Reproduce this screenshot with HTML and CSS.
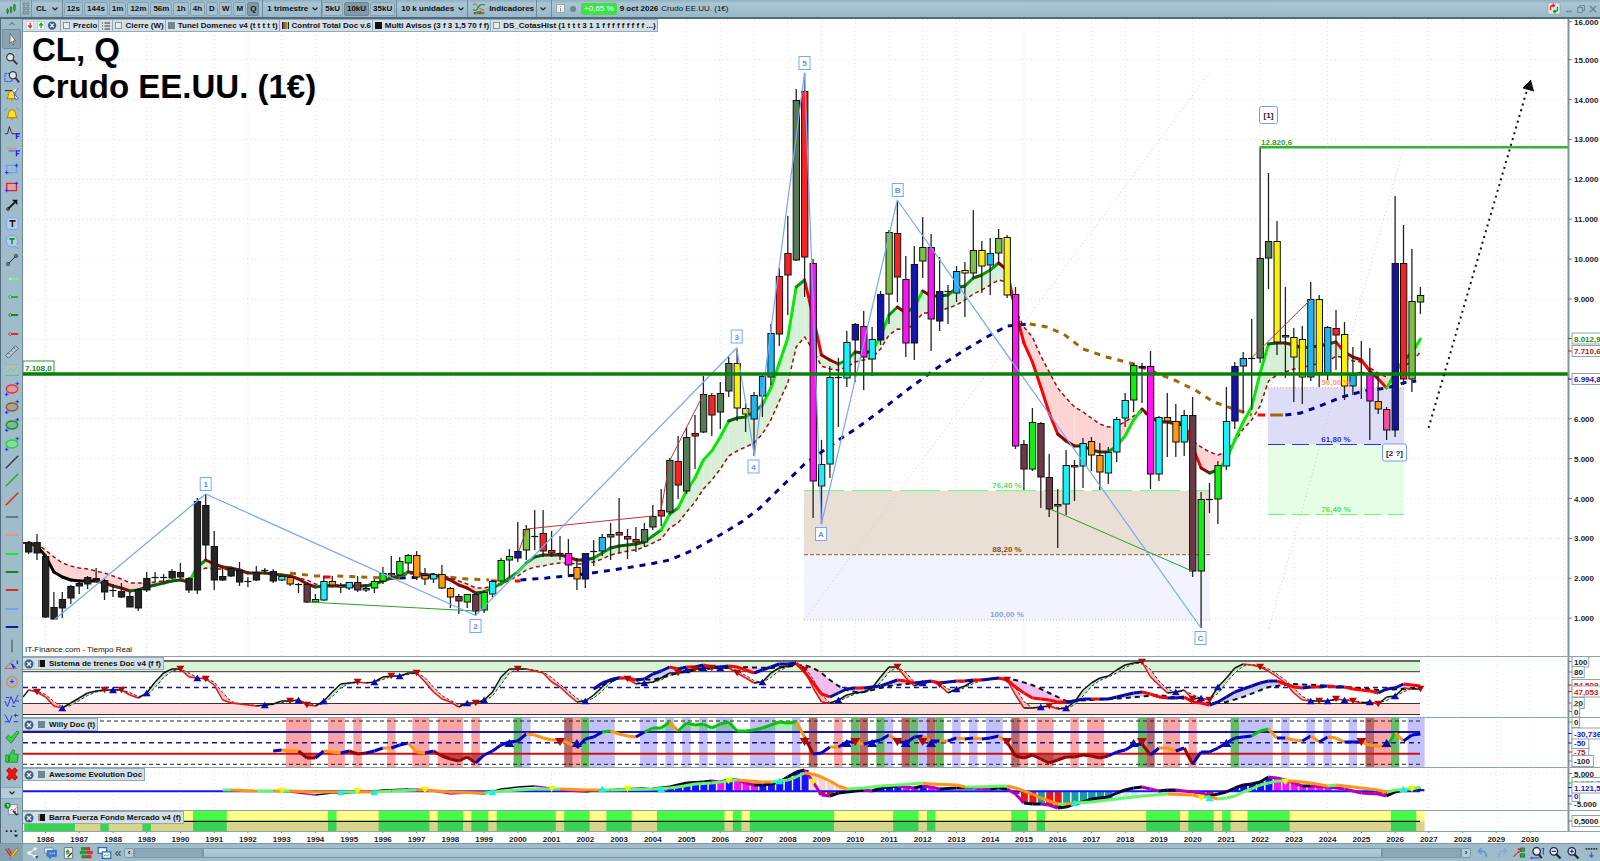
FILE: index.html
```html
<!DOCTYPE html>
<html lang="es">
<head>
<meta charset="utf-8">
<title>CL, Q - Crudo EE.UU. (1€)</title>
<link rel="stylesheet" href="styles.css">
</head>
<body>
<header class="topbar">
  <button class="tool tool-first" aria-label="Tipo de gráfico"><svg viewBox="0 0 14 14" class="ic"><path d="M3 6v7M7 4v8M11 1v9" stroke="#1c6b1c" fill="none"/><path d="M2 8h2v3H2zM6 5h2v5H6zM10 2h2v6h-2z" fill="#2fa52f" stroke="#1c6b1c" stroke-width=".6"/></svg></button>
  <button class="tool tool-grid" aria-label="Vincular"><svg viewBox="0 0 8 14" class="ic-slim"><path d="M1 1h2v3H1zM5 1h2v3H5zM1 5.500h2v3H1zM5 5.500h2v3H5zM1 10h2v3H1zM5 10h2v3H5z" fill="#b9c7ce" stroke="#5c6b73" stroke-width=".8"/></svg></button>
  <button class="drop drop-symbol">CL<svg viewBox="0 0 8 6" class="chev"><path d="M1.500 1.500L4 4l2.500-2.500"/></svg></button>
  <div class="group frames">
    <button class="pill">12s</button><button class="pill">144s</button><button class="pill">1m</button><button class="pill">12m</button><button class="pill">56m</button><button class="pill">1h</button><button class="pill">4h</button><button class="pill">D</button><button class="pill">W</button><button class="pill">M</button><button class="pill on">Q</button>
  </div>
  <button class="drop">1 trimestre<svg viewBox="0 0 8 6" class="chev"><path d="M1.500 1.500L4 4l2.500-2.500"/></svg></button>
  <div class="group units">
    <button class="pill">5kU</button><button class="pill on">10kU</button><button class="pill">35kU</button>
  </div>
  <button class="drop">10 k unidades<svg viewBox="0 0 8 6" class="chev"><path d="M1.500 1.500L4 4l2.500-2.500"/></svg></button>
  <button class="drop drop-ind"><svg viewBox="0 0 16 14" class="ic-ind"><path d="M1 3q3-3 5 1t8 5" stroke="#e33" fill="none"/><path d="M1 8q4 3 6-2t8-3" stroke="#1a8f1a" fill="none" stroke-width="1.300"/><path d="M2 11h3v2.500H2zM8 10h3v3.500H8z" fill="#e22"/><path d="M5 10h3v3.500H5zM11 11h3v2.500h-3z" fill="#1fae1f"/></svg>Indicadores</button>
  <button class="drop drop-arrow" aria-label="Más indicadores"><svg viewBox="0 0 8 6" class="chev"><path d="M1.500 1.500L4 4l2.500-2.500"/></svg></button>
  <button class="tool tool-info" aria-label="Información"><svg viewBox="0 0 10 10" class="ic-small"><rect x=".5" y=".5" width="8" height="8" fill="#e9eff2" stroke="#9aa"/><path d="M4.500 2v1M4.500 4v3.500" stroke="#889"/></svg></button>
  <span class="dot"></span>
  <span class="badge">+0,65 %</span>
  <b class="quote-date">9 oct 2026</b>
  <span class="quote-name">Crudo EE.UU. (1€)</span>
  <div class="window-buttons">
    <button class="tool" aria-label="Operar"><svg viewBox="0 0 16 14" class="ic-ind"><rect x="1" y=".5" width="14" height="13" rx="1.500" fill="#dfe9ed" stroke="#8aa"/><path d="M4 9V5.500q0-2 3-2h1M6.500 1.500l2 2-2 2" stroke="#e22" fill="none" stroke-width="1.600"/><path d="M12 5v3.500q0 2-3 2H8M9.500 8.500l-2 2 2 2" stroke="#1b9e1b" fill="none" stroke-width="1.600"/></svg></button>
    <button class="tool" aria-label="Minimizar"><svg viewBox="0 0 8 8" class="ic-win"><path d="M1 6.500h6" stroke-width="1.500"/></svg></button>
    <button class="tool" aria-label="Restaurar"><svg viewBox="0 0 8 8" class="ic-win"><path d="M2.500 2.500v-2h5v5h-2M.5 2.500h5v5h-5z"/></svg></button>
    <button class="tool" aria-label="Cerrar"><svg viewBox="0 0 8 8" class="ic-win"><path d="M1 1l6 6M7 1L1 7" stroke-width="1.500"/></svg></button>
  </div>
</header>

<div class="body">
  <aside class="side">
    <button class="side-scroll" aria-label="Subir"><svg viewBox="0 0 8 6" class="chev dim"><path d="M1.500 4L4 1.500 6.500 4"/></svg></button>
    <div class="side-tools" id="tools"></div>
    <button class="side-scroll raised" aria-label="Bajar"><svg viewBox="0 0 8 6" class="chev"><path d="M1.500 1.500L4 4l2.500-2.500"/></svg></button>
    <button class="side-btn tall" aria-label="Configuración"><svg viewBox="0 0 18 18" class="ic-side"><path d="M7 3h8v11H5V7" fill="#eef3f5" stroke="#789"/><path d="M7 10l2-2 2 2 3-4" stroke="#e44" fill="none"/><circle cx="4" cy="4" r="3.500" fill="#1a8f2a"/><path d="M3.500 3l1-.7v3.400" stroke="#fff" fill="none"/><path d="M10 10l5 5M13 10.500a2 2 0 1 0 3 3" stroke="#333" fill="none" stroke-width="1.600"/></svg></button>
    <button class="side-btn tall" aria-label="Más"><svg viewBox="0 0 18 18" class="ic-side"><path d="M2 7h2v2H2zM7 7h2v2H7zM12 7h2v2h-2zM11 12h5l-2.500 3z" fill="#222"/></svg></button>
  </aside>

  <main class="work" id="work">
    <section class="panel panel-price" aria-label="Precio">
      <svg class="plot" id="price"></svg>
      <div class="legend">
        <span class="chip"><svg viewBox="0 0 36 12" class="ic-legend"><rect x="1" y="1.500" width="8" height="9" fill="#fff" stroke="#bbb" stroke-width=".6"/><path d="M5 3v5M3 6l2 2.500L7 6" stroke="#e22" fill="none" stroke-width="1.400"/><rect x="13" y="1.500" width="8" height="9" fill="#fff" stroke="#bbb" stroke-width=".6"/><path d="M17 9V4M15 6l2-2.500L19 6" stroke="#1a1" fill="none" stroke-width="1.400"/><circle cx="29" cy="6" r="4.500" fill="#3a5f88"/><path d="M27 4l4 4M31 4l-4 4" stroke="#fff" stroke-width="1.200"/></svg></span>
        <span class="chip"><i class="sw hollow"></i>Precio</span>
        <span class="chip"><svg viewBox="0 0 10 10" class="ic-small"><path d="M1 2h1M1 5h1M1 8h1M3.500 2H9M3.500 5H9M3.500 8H9" stroke="#333" stroke-width="1.200"/></svg></span>
        <span class="chip"><i class="sw hollow"></i>Cierre (W)</span>
        <span class="chip"><i class="sw grey"></i>Tunel Domenec v4 (t t t t t)</span>
        <span class="chip"><i class="sw multi"></i>Control Total Doc v.6</span>
        <span class="chip"><i class="sw black"></i>Multi Avisos (3 f 3 1,5 70 f f)</span>
        <span class="chip"><i class="sw hollow"></i>DS_CotasHist (1 t t t 3 1 1 f f f f f f f f f ...)</span>
      </div>
      <h1 class="title">CL, Q<br>Crudo EE.UU. (1€)</h1>
      <span class="source">IT-Finance.com - Tiempo Real</span>
    </section>
    <section class="panel panel-trains" aria-label="Sistema de trenes">
      <svg class="plot" id="trains"></svg>
      <div class="tag"><svg viewBox="0 0 10 10" class="ic-small"><circle cx="5" cy="5" r="4.500" fill="#3a5f88"/><path d="M3 3l4 4M7 3L3 7" stroke="#fff" stroke-width="1.200"/></svg><i class="sw duo"></i>Sistema de trenes Doc v4 (f f)</div>
    </section>
    <section class="panel panel-willy" aria-label="Willy">
      <svg class="plot" id="willy"></svg>
      <div class="tag"><svg viewBox="0 0 10 10" class="ic-small"><circle cx="5" cy="5" r="4.500" fill="#3a5f88"/><path d="M3 3l4 4M7 3L3 7" stroke="#fff" stroke-width="1.200"/></svg><i class="sw grey"></i>Willy Doc (t)</div>
    </section>
    <section class="panel panel-awesome" aria-label="Awesome Evolution">
      <svg class="plot" id="awesome"></svg>
      <div class="tag"><svg viewBox="0 0 10 10" class="ic-small"><circle cx="5" cy="5" r="4.500" fill="#3a5f88"/><path d="M3 3l4 4M7 3L3 7" stroke="#fff" stroke-width="1.200"/></svg><i class="sw grey"></i>Awesome Evolution Doc</div>
    </section>
    <section class="panel panel-force" aria-label="Barra Fuerza">
      <svg class="plot" id="force"></svg>
      <div class="tag"><svg viewBox="0 0 10 10" class="ic-small"><circle cx="5" cy="5" r="4.500" fill="#3a5f88"/><path d="M3 3l4 4M7 3L3 7" stroke="#fff" stroke-width="1.200"/></svg><i class="sw duo"></i>Barra Fuerza Fondo Mercado v4 (f)</div>
    </section>
    <section class="panel panel-time" aria-label="Tiempo"><svg class="plot" id="time"></svg></section>
  </main>
</div>

<footer class="bottombar">
  <button class="tool pencils" aria-label="Dibujar"><svg viewBox="0 0 18 16" class="ic-foot"><path d="M2 3l6 9M5 2l4 7" stroke="#b33" fill="none" stroke-width="1.500"/><path d="M15 2L8 12l-1 3 3-2 7-9z" fill="#f4c430" stroke="#7a5a10" stroke-width=".7"/></svg></button>
  <button class="tool" aria-label="Compartir"><svg viewBox="0 0 18 16" class="ic-foot"><path d="M12 3L5 8l7 5" stroke="#f4f8fa" fill="none" stroke-width="1.300"/><circle cx="12" cy="3" r="2" fill="#f4f8fa"/><circle cx="5" cy="8" r="2.200" fill="#f4f8fa"/><circle cx="12" cy="12" r="2" fill="#f4f8fa"/><path d="M12 12h4l-2 2.500z" fill="#222"/></svg></button>
  <button class="tool" aria-label="Chat"><svg viewBox="0 0 18 16" class="ic-foot"><path d="M2 2h10v6H2z" fill="#e8f0fa" stroke="#57a" stroke-width=".8"/><path d="M5 5h11v7h-5l-3 3v-3H5z" fill="#3f7fe0" stroke="#2456a8" stroke-width=".8"/><path d="M8 8.500h1M10.500 8.500h1M13 8.500h1" stroke="#fff" stroke-width="1.200"/></svg></button>
  <button class="tool" aria-label="Informe"><svg viewBox="0 0 18 16" class="ic-foot"><path d="M4 1.500h10v13H4z" fill="#f2f2f2" stroke="#666"/><path d="M8 4l-2 3h4zM6 9h5" fill="#e22" stroke="#2a2" stroke-width="1.200"/><path d="M8 13l5-5" stroke="#333" stroke-width="1.500"/></svg></button>
  <button class="tool" aria-label="Profundidad"><svg viewBox="0 0 18 16" class="ic-foot"><path d="M3 1.500h5v3H3zM1.500 6h6.500v3H1.500zM3.500 11h4.500v3H3.500z" fill="#18a818" stroke="#0c6a0c" stroke-width=".6"/><path d="M9 1.500h4v3H9zM9 6h7v3H9zM9 11h5.500v3H9z" fill="#e33" stroke="#911" stroke-width=".6"/></svg></button>
  <button class="tool" aria-label="Ventanas"><svg viewBox="0 0 18 16" class="ic-foot"><path d="M1.500 1.500h10v7h-10z" fill="#fff" stroke="#2a6ac0" stroke-width="1.500"/><path d="M6.500 6.500h10v8h-10z" fill="#fff" stroke="#2a6ac0" stroke-width="1.500"/><path d="M8 12l2-2 2 2 3-3" stroke="#1a9a1a" fill="none"/></svg></button>
  <span class="collapse">«</span>
  <div class="scroll">
    <button class="scroll-btn" aria-label="Izquierda">‹</button>
    <span class="track track-left"></span><span class="thumb"></span><span class="track track-right"></span>
    <button class="scroll-btn" aria-label="Derecha">›</button>
  </div>
  <div class="foot-right">
    <button class="tool" aria-label="Deshacer"><svg viewBox="0 0 18 16" class="ic-foot"><path d="M6 2L3 6l4 3M3.500 6q9-2 9 7" stroke="#5f97c8" fill="none" stroke-width="2"/></svg></button>
    <button class="tool" aria-label="Rehacer"><svg viewBox="0 0 18 16" class="ic-foot"><path d="M12 2l3 4-4 3M14.500 6q-9-2-9 7" stroke="#7fabd0" fill="none" stroke-width="2"/></svg></button>
    <button class="tool" aria-label="Propiedades"><svg viewBox="0 0 18 16" class="ic-foot"><path d="M10 2h5v4h-5zM10 9h5v4h-5z" fill="#27b33a" stroke="#137021"/><path d="M2 13l7-7M7 3.500a3 3 0 0 1 4 3" stroke="#b33" fill="none" stroke-width="2"/><path d="M2 14l6-6" stroke="#eee"/></svg></button>
    <button class="tool" aria-label="Ajustar zoom"><svg viewBox="0 0 18 16" class="ic-foot"><circle cx="8" cy="6" r="4.500" fill="#e8f2f6" stroke="#222" stroke-width="1.500"/><path d="M11 10l3 4" stroke="#222" stroke-width="2.500"/><path d="M16 2v8M14.500 3.500L16 2l1.500 1.500M1 14h10M2.500 12.500L1 14l1.500 1.500" stroke="#22f" fill="none"/></svg></button>
    <button class="tool" aria-label="Alejar"><svg viewBox="0 0 18 16" class="ic-foot"><circle cx="7" cy="6" r="4.500" fill="#e8f2f6" stroke="#222" stroke-width="1.500"/><path d="M10 9.500l5 5" stroke="#222" stroke-width="2.500"/><path d="M4.500 6h5" stroke="#22f" stroke-width="1.500"/></svg></button>
    <button class="tool" aria-label="Acercar"><svg viewBox="0 0 18 16" class="ic-foot"><circle cx="7" cy="6" r="4.500" fill="#e8f2f6" stroke="#222" stroke-width="1.500"/><path d="M10 9.500l5 5" stroke="#222" stroke-width="2.500"/><path d="M4.500 6h5M7 3.500v5" stroke="#22f" stroke-width="1.500"/></svg></button>
    <button class="tool" aria-label="Regla"><svg viewBox="0 0 18 16" class="ic-foot"><path d="M2 3h14" stroke="#333" stroke-width="2" stroke-dasharray="2 1"/><path d="M9 7v6M6.500 10.500L9 13l2.500-2.500" stroke="#36c" fill="none" stroke-width="1.500"/></svg></button>
  </div>
</footer>
<script src="chart.js"></script>
</body>
</html>
```

FILE: styles.css
```css
* { box-sizing: border-box; }
html, body { height: 100%; margin: 0; }
body {
  display: flex;
  flex-direction: column;
  overflow: hidden;
  background: #9fbccb;
  color: #111;
  font: bold 8px/12px "Liberation Sans", Arial, sans-serif;
}
button { font: inherit; color: inherit; margin: 0; padding: 0; border: 0; background: none; }
svg { display: block; }

.topbar {
  display: flex;
  align-items: center;
  flex: none;
  height: 19px;
  padding-left: 1px;
  background: linear-gradient(#8fb0c0, #a9c6d5 20%, #98b7c7);
  border-bottom: 2px solid #516b7c;
}
.tool { display: flex; align-items: center; justify-content: center; }
.tool-first { width: 20px; height: 17px; border-right: 1px solid #7b98a8; }
.tool-grid { width: 11px; height: 17px; border-right: 1px solid #7b98a8; }
.tool-info { margin-left: 3px; width: 12px; }
.ic { width: 12px; height: 12px; }
.ic-slim { width: 8px; height: 13px; }
.ic-small { width: 10px; height: 10px; flex: none; }
.ic-ind { width: 14px; height: 13px; }
.ic-win { width: 8px; height: 8px; fill: none; stroke: #6c8896; }
.chev { width: 8px; height: 6px; fill: none; stroke: #222; stroke-width: 1.2; }
.chev.dim { stroke: #69828f; }
.drop {
  display: flex;
  align-items: center;
  gap: 3px;
  height: 17px;
  padding: 0 2px 0 4px;
  border-right: 1px solid #6d8a9a;
}
.drop-symbol { gap: 4px; padding-right: 3px; }
.drop-arrow { padding: 0 4px 0 2px; }
.group { display: flex; align-items: center; height: 17px; border-right: 1px solid #6d8a9a; }
.frames { gap: 1px; padding: 0 3px 0 1px; }
.units { gap: 1px; padding: 0 1px 0 0; }
.pill { height: 14px; padding: 0 2px; border: 1px solid #86a2b1; border-radius: 2px; background: #a5c2d1; line-height: 12px; }
.pill.on { background: #7e9aaa; border-color: #6b8797; }
.dot { width: 6px; height: 6px; margin: 0 5px 0 3px; border-radius: 50%; background: #77858c; }
.badge { padding: 0 3px; border-radius: 2px; background: #41e04b; color: #fff; font-weight: normal; }
.quote-date { margin-left: 3px; }
.quote-name { margin-left: 3px; font-weight: normal; }
.window-buttons { display: flex; gap: 4px; margin-left: auto; padding-right: 3px; }

.body { display: flex; flex: 1; min-height: 0; }
.side {
  display: flex;
  flex-direction: column;
  flex: none;
  width: 23px;
  border-left: 1px solid #516b7c;
  border-right: 1px solid #6e8a99;
  background: #9fbccb;
}
.side-scroll { display: flex; align-items: center; justify-content: center; flex: none; height: 10px; }
.side-scroll.raised { height: 12px; background: #b5ced9; border-top: 1px solid #8aa5b3; border-bottom: 1px solid #8aa5b3; }
.side-tools { display: flex; flex-direction: column; flex: 1; min-height: 0; overflow: hidden; padding-bottom: 4px; }
.side-btn { display: flex; align-items: center; justify-content: center; flex: 1; min-height: 0; margin: 0 1px; border-radius: 2px; }
.side-btn.on { background: #89a3b1; border: 1px solid #708b99; }
.side-btn.tall { flex: none; height: 22px; }
.ic-side { width: 16px; height: 16px; fill: none; }

.work {
  display: grid;
  grid-template-rows: 637fr 61fr 50fr 43fr 21fr 12fr;
  flex: 1;
  min-width: 0;
  background: #fff;
}
.panel { position: relative; min-height: 0; border-top: 1px solid #8fa3ad; }
.panel-price { border-top: 0; }
.plot { position: absolute; inset: 0; width: 100%; height: 100%; overflow: hidden; }
.legend { position: absolute; left: 0; top: 0; display: flex; height: 13px; }
.chip, .tag { display: flex; align-items: center; gap: 3px; background: #d3e0e7; border: 1px solid #97a9b3; border-left-width: 0; white-space: nowrap; }
.chip { padding: 0 1px 0 2px; }
.tag { position: absolute; left: 0; top: 0; height: 13px; padding: 0 2px 0 1px; gap: 4px; }
.ic-legend { width: 34px; height: 11px; }
.sw { width: 7px; height: 7px; flex: none; }
.hollow { border: 1px solid #8b9499; background: #e6edf1; }
.grey { background: #6f8592; }
.black { background: #111; }
.multi { background: linear-gradient(90deg, #222 0 1px, #e22 1px 3px, #3b3 3px 5px, #fa0 5px 6px, #222 6px); }
.duo { background: linear-gradient(90deg, #8c9aa2 0 2px, #111 2px); }
.title { position: absolute; left: 9px; top: 12px; margin: 0; font: bold 33px/37px "Liberation Sans", Arial, sans-serif; color: #000; }
.source { position: absolute; left: 2px; bottom: 0; font-weight: normal; }
.plot text { font: bold 8px "Liberation Sans", Arial, sans-serif; }

.bottombar { display: flex; align-items: center; flex: none; height: 18px; background: #9fbccb; border-top: 1px solid #7c98a7; }
.ic-foot { width: 15px; height: 14px; }
.bottombar .tool { width: 18px; height: 17px; flex: none; }
.bottombar .pencils { width: 23px; background: #86a1b0; }
.collapse { width: 10px; text-align: center; font: 12px/16px "Liberation Sans", Arial, sans-serif; color: #345; }
.scroll { display: flex; align-items: center; flex: 1; height: 10px; margin: 0 3px 0 1px; }
.scroll-btn { width: 10px; height: 10px; border: 1px solid #7c98a7; border-radius: 2px; background: #b5ced9; line-height: 8px; }
.track { height: 10px; background: #8ba8b7; border: 1px solid #7c98a7; }
.track-left { flex: 67; }
.thumb { flex: 1185; height: 10px; background: linear-gradient(#b3cedb, #a3c0cf); border: 1px solid #7c98a7; }
.track-right { flex: 77; }
.foot-right { display: flex; overflow: hidden; }
```

FILE: chart.js
```js
// Horizontal design width of the plots and their left edge.
const LEFT = 23, SPAN = 1577;
const bx = i => 28.6 + 8.435 * i;            // bar index to design x
const NS = 'http://www.w3.org/2000/svg';

function surface(id, top, height) {
  const svg = document.getElementById(id);
  svg.replaceChildren();
  const sx = svg.clientWidth / SPAN, sy = svg.clientHeight / height;
  const X = x => +((x - LEFT) * sx).toFixed(1), Y = y => +((y - top) * sy).toFixed(1);
  const add = (tag, attrs, text) => {
    const el = document.createElementNS(NS, tag);
    for (const k in attrs) el.setAttribute(k, attrs[k]);
    if (text !== undefined) el.textContent = text;
    svg.append(el);
    return el;
  };
  const s = {
    add,
    line: (x1, y1, x2, y2, stroke, w = 1, dash = '') =>
      add('line', { x1: X(x1), y1: Y(y1), x2: X(x2), y2: Y(y2), stroke, 'stroke-width': w, ...(dash && { 'stroke-dasharray': dash }) }),
    path: (pts, stroke, w = 1, dash = '', fill = 'none') =>
      add('polyline', { points: pts.map(p => X(p[0]) + ',' + Y(p[1])).join(' '), stroke, 'stroke-width': w, fill, 'stroke-linejoin': 'round', ...(dash && { 'stroke-dasharray': dash }) }),
    rect: (x1, y1, x2, y2, fill, more = {}) =>
      add('rect', { x: X(x1), y: Y(y1), width: Math.max(0, X(x2) - X(x1)), height: Math.max(0, Y(y2) - Y(y1)), fill, ...more }),
    text: (x, y, t, fill = '#222', anchor = 'start') => add('text', { x: X(x), y: Y(y) + 3, fill, 'text-anchor': anchor }, t),
    tri: (i, y, up, fill, r = 4) => {
      const x = X(bx(i)), c = Y(y), d = up ? -1 : 1;
      add('polygon', { points: `${x - r},${c - d * r * .8} ${x + r},${c - d * r * .8} ${x},${c + d * r * .8}`, fill });
    },
    axisLabel: (y, t, color = '#222', boxed = true) => {
      s.line(1568, y, 1572, y, color === '#222' ? '#6b7f8a' : color);
      if (boxed) s.rect(1572, y - 5.5, 1575 + t.length * 4.6, y + 5.5, '#fff', { stroke: '#8fa3ad' });
      s.text(1574, y, t, color);
    }
  };
  return s;
}

function grid(s, y1, y2, rows = []) {
  for (let y = 0; y < 46; y++) s.line(45.5 + 33.74 * y, y1, 45.5 + 33.74 * y, y2, '#e3e3e3', 1, '1 3');
  rows.forEach(y => s.line(23, y, 1568, y, '#e3e3e3', 1, '1 3'));
}
const axisEdge = (s, y1, y2) => { s.rect(1568.5, y1, 1600, y2, '#fff'); s.line(1568.5, y1, 1568.5, y2, '#8094a0', 2); };

const COLORS = { k: '#252525', c: '#14f4f8', o: '#ff9a10', b: '#6c3a46', g: '#12f012', p: '#f7509a', n: '#1414a8', l: '#7ec043', r: '#fb2222', m: '#ff12f4', s: '#22b4ee', d: '#557a55', y: '#f8f010' };

// high, body top, body bottom, low, colour
const CANDLES = `541 542 552 554 k|534 542 553 560 k|554 556 617 618 k|592 607 619 620 k|592 599 608 618 k|585 586 598 604 k|582 583 586 594 k|576 577 584 589 k|568 578 580 581 k|579 580 592 600 k|584 590 591 597 k|583 591 597 598 k|592 596 607 607 k|588 589 608 611 k|572 578 590 592 k|572 577 578 582 k|574 577 578 583 k|569 571 578 579 k|563 572 577 578 k|577 578 590 593 k|498 501 590 594 k|494 505 545 560 k|531 546 580 590 k|568 576 580 581 k|568 568 576 577 k|562 570 582 586 k|577 581 582 587 k|566 572 580 581 k|568 570 571 574 k|569 571 581 583 k|576 576 580 581 c|576 577 584 586 o|583 584 585 593 k|582 584 602 603 b|594 599 602 603 g|577 581 600 601 c|576 581 585 586 o|583 585 587 593 o|582 582 588 590 c|576 582 590 592 b|584 588 590 592 c|579 581 588 593 g|567 573 581 584 g|556 573 575 578 p|557 561 575 576 g|554 555 563 571 g|551 555 577 580 o|568 575 579 585 o|573 574 579 583 c|565 574 588 589 o|587 588 597 608 o|594 596 601 614 b|594 594 602 608 g|593 594 611 615 b|590 592 610 613 g|580 581 594 597 c|558 560 581 582 g|549 556 560 578 g|522 551 558 562 n|525 529 550 560 l|510 536 537 550 k|510 533 551 557 r|531 550 553 557 r|536 553 554 560 k|539 553 565 577 m|558 567 579 590 o|553 553 579 588 n|540 551 552 566 k|534 537 551 556 s|523 534 537 560 d|498 532 535 553 r|529 536 539 559 r|527 539 542 552 r|523 529 542 547 d|505 516 527 530 d|489 510 516 526 r|458 460 512 514 d|436 461 485 499 r|427 437 491 494 d|415 433 436 469 r|376 394 432 433 d|393 395 415 436 r|382 393 412 429 d|357 363 391 397 d|349 363 408 421 y|403 408 414 432 y|392 395 419 456 s|375 376 396 417 s|324 333 377 385 s|268 276 334 346 r|216 253 275 315 r|89 100 260 261 d|73 91 257 297 r|259 263 481 518 m|440 464 486 524 c|366 377 464 478 c|358 377 378 427 k|331 342 378 387 c|323 324 340 382 n|311 326 357 390 m|327 339 359 376 c|291 294 340 345 n|230 232 294 324 l|202 233 277 302 r|256 279 343 357 m|246 264 343 360 n|217 247 261 278 l|234 247 319 351 m|257 291 321 331 n|285 291 292 324 k|266 271 293 302 s|262 270 273 317 y|210 250 273 277 l|241 250 266 293 y|238 253 265 295 s|229 238 253 263 l|235 237 295 298 y|287 294 446 449 m|440 444 469 490 b|408 422 469 471 g|422 423 477 508 b|454 477 509 517 b|489 504 506 548 g|450 465 504 515 c|460 465 467 501 o|438 443 466 488 c|437 441 455 471 o|443 455 472 490 o|447 452 473 484 c|417 419 452 462 c|393 400 418 427 c|363 365 400 412 g|363 366 368 403 n|351 366 474 489 m|416 417 474 481 c|393 417 421 457 o|404 421 442 457 o|410 415 442 456 c|397 415 571 577 b|492 499 571 628 g|483 499 500 513 k|461 465 499 524 g|387 421 466 470 c|362 366 421 429 n|352 358 366 413 s|319 358 359 410 k|148 258 358 363 d|173 241 258 289 d|221 241 342 355 y|287 335 337 378 s|328 337 357 402 y|326 339 377 404 y|282 299 377 381 s|295 299 373 387 y|326 327 373 380 s|310 328 335 370 r|322 334 386 400 y|347 375 386 395 s|341 372 373 399 k|348 374 401 440 m|374 401 409 414 o|407 409 430 440 p|196 263 430 437 n|225 263 379 385 r|249 301 379 392 l|287 295 302 314 l`
  .split('|').map(r => r.split(' ').map((v, k) => k < 4 ? +v : v));

const FAST = [543,546,556,572,577,580,581,581,581,583,586,588,591,590,587,585,583,581,580,582,567,560,564,567,568,570,573,573,573,574,575,576,579,584,587,586,586,586,586,586,586,584,581,578,576,572,573,575,575,577,580,585,588,593,592,588,584,578,572,563,557,555,555,555,557,560,560,558,553,548,546,545,544,542,536,530,514,508,491,478,460,451,437,421,418,417,412,405,388,363,338,287,280,317,355,360,364,360,352,353,351,337,315,307,313,307,291,296,296,295,288,286,278,275,270,263,270,311,343,362,387,413,434,441,446,446,450,452,452,446,436,420,409,417,422,422,424,425,447,468,473,470,460,440,422,407,373,344,343,343,345,348,347,346,344,342,352,357,360,371,379,388,373,360,353,339];
const SLOW = [542,544,550,557,563,566,568,569,571,573,576,579,583,583,583,582,581,580,579,580,572,568,569,569,570,571,572,573,573,574,575,576,578,580,584,585,585,585,585,585,585,583,581,579,577,574,574,574,574,575,578,581,584,588,588,586,583,580,576,570,567,566,564,563,563,564,564,562,559,555,553,551,550,547,543,539,528,523,512,502,489,480,469,456,451,447,443,434,420,401,383,347,337,350,366,369,370,367,362,360,358,349,335,329,330,324,313,313,311,308,305,300,294,290,285,280,282,310,327,337,356,372,388,398,407,412,418,424,427,426,422,416,412,417,420,421,422,422,441,447,452,455,452,441,429,420,406,381,375,372,369,368,365,364,362,356,358,361,362,368,373,377,370,366,362,352];
// long average: colour and its points
const LONG = [
  ['#9a6a08', [[31,573],[34,576],[34.8,576]]], ['#f00', [[34.9,577],[35.8,577]]], ['#9a6a08', [[36.6,576],[42,578]]],
  ['#f00', [[42.6,578],[44,578]]], ['#00008c', [[44,578],[46.5,577]]], ['#f00', [[46.5,577],[48,577]]], ['#9a6a08', [[48.6,576],[52,579],[54.6,580]]],
  ['#f00', [[54.8,581],[58.3,581]]],
  ['#00008c', [[58.3,580],[61.4,578],[66,574],[70,569],[73.7,564],[76,560],[78.8,550],[82.4,533],[84.7,521],[86.7,508],[88.5,493],[92,464],[94,452],[96.2,439],[98.200,428],[100.8,412],[104,391],[107.7,368],[110.8,351],[113.6,337],[116,326],[118.500,324]]],
  ['#9a6a08', [[118.7,324],[120.7,327],[122.7,334],[125,349],[127.8,357],[131,364],[133.4,372],[136.1,381],[138.5,391],[140.5,402],[142.900,409],[145,415]]],
  ['#f00', [[145.7,415],[146.6,415]]], ['#9a6a08', [[147.2,415],[148.700,415]]],
  ['#00008c', [[149,415],[150.8,413],[153.1,406],[155.7,397],[158.3,391],[161,388],[163.4,382],[164.5,381]]]
];
const longDash = p => p[p.length - 1][0] - p[0][0] > 2 ? '6 6' : '';
const slope = d => d < -8 ? '#08e808' : d < -3 ? '#079a07' : d < 0 ? '#0f5a10' : d < 3 ? '#4a2a08' : d < 9 ? '#8c0606' : '#f40404';

function drawPrice() {
  const s = surface('price', 19, 637), rows = [];
  for (let v = 1; v < 17; v++) rows.push(299 + (9 - v) * 39.9);
  grid(s, 19, 656, rows);
  // retracement zones
  s.rect(804, 491, 1210, 554.7, '#eadfd5'); s.rect(804, 554.7, 1210, 620, '#f1f4fe');
  s.rect(1268, 387.7, 1404, 444.5, '#deddf8'); s.rect(1268, 444.5, 1404, 514.5, '#e6fde6');
  s.line(804, 620, 1209, 73, '#c9c9c9', 1, '1 3'); s.line(1269, 628, 1403, 150, '#c9c9c9', 1, '1 3');
  s.line(804, 490.7, 1210, 490.7, '#6f6', 1, '40 8'); s.line(804, 554.7, 1210, 554.7, '#96591e', 1, '4 2');
  s.line(804, 620, 1210, 620, '#a9bdf0', 1, '1 2');
  s.line(1268, 387.7, 1404, 387.7, '#ff9c70', 1, '1 2'); s.line(1268, 444.5, 1404, 444.5, '#33d', 1, '17 7');
  s.line(1268, 514.5, 1404, 514.5, '#6f6', 1, '17 7');
  // tunnel
  for (let i = 1; i < FAST.length; i++) {
    const up = FAST[i] + FAST[i - 1] < SLOW[i] + SLOW[i - 1];
    s.path([[bx(i - 1), FAST[i - 1]], [bx(i), FAST[i]], [bx(i), SLOW[i]], [bx(i - 1), SLOW[i - 1]]], 'none', 0, '', up ? '#d7efd7' : '#fdd3d3');
  }
  LONG.forEach(([c, p]) => s.path(p.map(([i, y]) => [bx(i), y]), c, 3, longDash(p)));
  s.path(SLOW.map((y, i) => [bx(i), y]), '#a00d0d', 1.5, '4 3');
  s.line(23, 543, bx(0), FAST[0], '#8c0606', 2);
  for (let i = 1; i < FAST.length; i++) {
    s.path([[bx(i - 1), FAST[i - 1]], [bx(i), FAST[i]]], i > 1 && i < 9 ? '#000' : slope(FAST[i] - FAST[i - 1]), 3).setAttribute('stroke-linecap', 'round');
  }
  CANDLES.forEach(([h, t, b, l, c], i) => {
    const x = bx(i);
    s.line(x, h, x, l, '#222', 1.3);
    if (b - t < 1.5) s.line(x - 3.5, t + .5, x + 3.5, t + .5, '#111', 1.2);
    else s.rect(x - 3, t + .5, x + 3.300, b, COLORS[c], { stroke: '#111', 'stroke-width': 1 });
  });
  // swing lines
  const red = '#c83232', blue = '#78a5ff';
  s.path([[519, 551], [526.5, 529], [652.5, 516]], red); s.path([[661, 510], [670, 460], [703.6, 394]], red);
  s.line(1251.5, 358, 1311, 299, red); s.line(308, 602, 475, 611, '#2aa02a'); s.line(1050, 509, 1192, 571, '#2aa02a');
  s.path([[54, 620], [205.7, 494], [475.6, 615.5], [736.7, 348], [754.4, 456], [804.5, 73], [821.4, 524], [897.3, 200], [1201, 628]], blue, 1.2);
  s.line(23, 374, 1568, 374, '#078207', 3.500);
  s.line(1259.5, 147.3, 1568, 147.3, '#31b431', 2.5);
  s.rect(23, 361, 54, 372.500, '#fff', { stroke: '#2a9a2a' }); s.text(25, 367.5, '7.108,0', '#118811');
  s.text(1261, 142, '12.820,6', '#2aa52a');
  [['76,40 %', 1007, 485, '#62dc62'], ['88,20 %', 1007, 549, '#8a4f18'], ['100,00 %', 1007, 614, '#8ea0d4'], ['50,00 %', 1336, 382, '#ff9c70'], ['61,80 %', 1336, 439, '#3333cc'], ['76,40 %', 1336, 509, '#62dc62']]
    .forEach(([t, x, y, c]) => s.text(x, y, t, c, 'middle'));
  [['1', 205.7, 484], ['2', 475.5, 626], ['3', 736.7, 336.5], ['4', 753.5, 466.5], ['5', 804.5, 63], ['A', 821, 534], ['B', 897.7, 190], ['C', 1200.500, 638]].forEach(([t, x, y]) => {
    s.rect(x - 5.5, y - 6.5, x + 5.5, y + 6.5, '#fff', { stroke: blue });
    s.text(x, y, t, '#5f90f5', 'middle');
  });
  [['[1]', 1268.5, 115, 9], ['[2 ?]', 1394.5, 452.5, 12]].forEach(([t, x, y, r]) => {
    s.rect(x - r, y - 8.5, x + r, y + 8.5, '#fdfdff', { stroke: '#6f9ff5', rx: 2 });
    s.text(x, y, t, '#222', 'middle');
  });
  s.line(1428.5, 428, 1527, 90, '#111', 2, '2 4');
  s.path([[1531, 80], [1523, 88], [1534, 91]], '#111', 1, '', '#111');
  axisEdge(s, 19, 656);
  for (let v = 1; v < 17; v++) {
    if (v === 8 || v === 7) continue;
    s.axisLabel(299 + (9 - v) * 39.9 + (v === 16 ? 2 : 0), v + '.000', '#222', false);
  }
  s.axisLabel(338.5, '8.012,9', '#128a12'); s.axisLabel(351, '7.710,6', '#b02020'); s.axisLabel(379, '6.994,8', '#1414a0');
}

const OSC = [690,692,697,706,708,703,698,693,691,690,690,690,695,698,693,682,673,669,669,677,678,679,685,700,703,704,705,706,705,704,701,701,700,705,706,701,692,684,683,682,683,682,677,676,676,673,673,682,692,699,702,707,703,703,700,692,677,669,669,669,671,673,682,687,695,702,701,695,687,679,677,679,684,683,682,678,673,673,670,669,668,668,668,668,673,678,683,682,673,668,666,664,670,688,702,703,700,695,693,692,688,677,667,667,678,686,683,681,685,693,689,686,681,680,679,678,680,695,708,708,707,706,709,708,702,690,683,678,676,670,665,663,662,677,685,693,692,690,699,698,700,687,678,668,664,665,667,671,677,683,693,700,701,701,701,699,700,701,703,702,704,697,696,688,689,689];
const TREND = [689,683,680,678,678,680,679,674,671,667,669,667,667,665,667,667,666,667,670,673,670,667,664,664,663,672,683,694,697,693,689,688,688,687,686,683,680,681,683,682,681,683,682,681,681,680,680,679,678,680,687,693,698,699,700,702,702,701,699,699,699,699,697,695,693,692,694,697,698,698,697,702,703,705,702,697,692,689,686,683,681,681,684,687,688,687,687,686,687,687,689,690,691,693,689,688,684,685,686];
const LAG = [[67,689],[70,678],[74,680],[77,673],[80,669],[84,667],[88,668],[92,665],[93,668],[94,673],[95,680],[96,686],[97,690],[98,692],[99,692],[100,690],[102,686],[106,682],[110,682],[115,678],[117,680],[119,685],[121,693],[123,701],[126,700],[130,698],[134,695],[138,700],[140,703],[142,702],[144,697],[147,687],[150,684],[155,686],[160,690],[163,689],[165,687]];
const lagAt = i => { const k = Math.max(1, LAG.findIndex(p => p[0] >= i)), [a, b] = [LAG[k - 1], LAG[k]]; return a[1] + (b[1] - a[1]) * (i - a[0]) / (b[0] - a[0]); };
const SELL = [1,9,11,18,21,31,33,39,43,46,53,58,71,77,79,81,84,92,103,108,116,121,132,138,140,146,153,155,157,160,165];
const BUY = [4,10,14,20,28,32,35,41,44,52,54,66,73,78,80,82,87,96,106,110,120,123,136,139,141,152,154,156,159,162];

function drawTrains() {
  const s = surface('trains', 657, 60);
  grid(s, 656, 717);
  s.rect(23, 661, 1420, 671.7, '#d9f5d5'); s.rect(23, 703.5, 1420, 714.5, '#fddcdc');
  s.line(23, 661, 1420, 661, '#666', 2);
  [671.7, 703.5, 714.5].forEach(y => s.line(23, y, 1420, y, '#333'));
  s.line(23, 687.5, 1420, 687.5, '#1414a8', 1.5, '5 4');
  for (let k = 1; k < TREND.length; k++) {
    const i = 67 + k, up = TREND[k] < lagAt(i);
    s.path([[bx(i - 1), TREND[k - 1]], [bx(i), TREND[k]], [bx(i), lagAt(i)], [bx(i - 1), lagAt(i - 1)]], 'none', 0, '', up ? '#c9c9fa' : '#f0bdf0');
  }
  const slow = OSC.map((y, i) => i ? (y + OSC[i - 1]) / 2 : y);
  for (let i = 1; i < OSC.length; i++) s.path([[bx(i - 1), OSC[i - 1]], [bx(i), OSC[i]], [bx(i), slow[i]], [bx(i - 1), slow[i - 1]]], 'none', 0, '', OSC[i] < OSC[i - 1] ? '#bdebbd' : '#f8baba');
  s.path(slow.map((y, i) => [bx(i), y]), '#333', 1, '3 2');
  s.path(LAG.map(([i, y]) => [bx(i), y]), '#111', 2, '5 4');
  s.line(23, 697, bx(0), 690, '#111', 1.300);
  for (let i = 1; i < OSC.length; i++) s.path([[bx(i - 1), OSC[i - 1]], [bx(i), OSC[i]]], OSC[i] <= OSC[i - 1] ? '#111' : '#e41616', 1.5);
  for (let k = 1; k < TREND.length; k++) s.path([[bx(66 + k), TREND[k - 1]], [bx(67 + k), TREND[k]]], TREND[k] < TREND[k - 1] ? '#0a0a9c' : TREND[k] > TREND[k - 1] ? '#fb0505' : k % 2 ? '#0a0a9c' : '#fb0505', 3);
  SELL.forEach(i => s.tri(i, OSC[i], false, '#b40808'));
  BUY.forEach(i => s.tri(i, OSC[i], true, '#0808b4'));
  axisEdge(s, 656, 717);
  s.axisLabel(661.5, '100'); s.axisLabel(672, '80'); s.axisLabel(685, '54,509', '#d11515'); s.axisLabel(703, '20'); s.axisLabel(711.500, '0'); s.axisLabel(691.5, '47,053', '#d11515');
}

const BANDS = { R: ['#fca4a4', '30.5-33.5 35.5-37.5 38.5-39.5 42.5-43.5 45.5-47.5 48.5-51.5 52.5-53.5 64.5-65.5 95.5-96.5 117.5-118.5 119.5-121.5 123.5-124.5 125.5-127.5 134.5-136.5 137.5-138.5 159.5-161.5'],
  D: ['#b96868', '63.5-64.5 92.5-93.5 98.5-99.5 103.5-104.5 106.5-107.5 116.5-117.5 132.5-133.5 158.5-159.5'],
  G: ['#66bb66', '57.5-58.5 65.5-66.5 97.5-98.5 100.5-101.5 104.5-105.5 107.5-108.5 131.5-132.5 142.5-143.5 161.5-162.5'],
  B: ['#c3c0fa', '58.5-59.5 66.5-69.5 72.5-74.5 75.5-76.5 77.5-78.5 79.5-80.5 81.5-83.5 85.5-88.5 90.5-91.5 101.5-102.5 105.5-106.5 109.5-110.5 111.5-112.5 113.5-115.5 143.5-147.5 148.5-149.5 151.5-152.5 153.5-154.5 156.5-157.5 163.5-165.5'] };
const parse = str => str.split(' ').map(t => { const m = t.match(/^([\d.]+):([\d.]+)(\w?)$/); return [+m[1], +m[2], m[3]]; });
// bar:y plus the colour of the segment that ends there
const WILLY = parse('29:751 30:750b 31:751o 32:751o 33:758d 34:758d 35:751b 36:752o 37:753o 38:751b 39:754d 40:753d 41:751b 42:748b 43:748o 44:745b 45:743b 46:752o 47:753o 48:751b 49:756d 50:759d 51:761d 52:757d 53:763d 54:755b 55:751b 56:745b 57:742b 58:741b 59:734b 60:735o 61:738o 62:740o 63:740o 64:743o 65:748o 66:739b 67:737b 68:732b 69:731g 70:734o 71:736o 72:737o 73:732b 74:728g 75:728g 76:722g 77:731o 78:723g 79:725g 80:724g 81:728g 82:724g 83:722g 84:731g 85:731g 86:730g 87:728g 88:725g 89:722g 90:723g 91:722g 92:737o 93:754d 94:753b 95:747b 96:747o 97:742b 98:742b 99:744o 100:742b 101:740b 102:735b 103:741o 104:743b 105:737b 106:736b 107:741o 108:741b 109:741o 110:738b 111:739o 112:738b 113:739o 114:738b 115:736b 116:742o 117:756d 118:758d 119:755d 120:759d 121:763d 122:760d 123:757d 124:757d 125:755d 126:756d 127:758d 128:756d 129:752b 130:750b 131:745b 132:744b 133:755d 134:748b 135:748o 136:751o 137:748b 138:764d 139:752b 140:752b 141:748b 142:743b 143:738b 144:737b 145:736b 146:731g 147:729g 148:738o 149:738b 150:740o 151:741o 152:736b 153:742o 154:737b 155:738o 156:742o 157:742b 158:742b 159:745o 160:746o 161:747o 162:733g 163:741o 164:735b 165:734b');
const WC = { b: '#0404c4', o: '#ff9410', d: '#970505', g: '#05c405' };

function drawWilly() {
  const s = surface('willy', 718, 49);
  grid(s, 717, 767);
  for (const k in BANDS) BANDS[k][1].split(' ').forEach(r => { const [a, b] = r.split('-'); s.rect(bx(+a), 717, bx(+b), 767, BANDS[k][0]); });
  [721, 764.3].forEach(y => s.line(23, y, 1420, y, '#222', 1, '4 3'));
  s.line(23, 742.7, 1420, 742.7, '#1414a8', 1.5, '5 4');
  const area = (base, clip, fill) => s.path([[bx(29), base], ...WILLY.map(([i, y]) => [bx(i), clip(y)]), [bx(165), base]], 'none', 0, '', fill);
  area(732, y => Math.min(y, 732), 'rgba(40,180,40,.35)');
  area(753.7, y => Math.max(y, 753.7), 'rgba(150,10,10,.6)');
  s.line(23, 732, 1420, 732, '#1818a4', 2); s.line(23, 753.7, 1420, 753.7, '#cc1212', 2);
  WILLY.forEach(([i, y, c], k) => k && s.path([[bx(WILLY[k - 1][0]), WILLY[k - 1][1]], [bx(i), y]], WC[c], 3));
  [63, 92, 98, 103, 106, 116, 132, 158].forEach(i => s.tri(i, 742, false, '#b40808', 5));
  [57, 65, 97, 100, 104, 107, 131, 142, 161].forEach(i => s.tri(i, 743, true, '#0808b4', 5));
  axisEdge(s, 717, 767);
  s.axisLabel(722, '0'); s.axisLabel(752, '-75', '#d11515'); s.axisLabel(743, '-50', '#1414d0'); s.axisLabel(733.5, '-30,736', '#1414d0'); s.axisLabel(761, '-100');
}

const SIGNAL = parse('23:790 24:790g 27:791o 29:791g 30:791o 31:791g 34:792o 37:792o 39:792g 41:792o 43:791g 46:790g 47:790o 50:792o 54:793o 55:792g 58:790g 60:789g 63:789g 66:790o 68:790o 69:790g 74:789g 76:788g 77:787g 79:784g 81:783g 83:781g 84:780g 87:782o 88:782o 90:780g 91:777g 92:773g 93:774o 94:777o 95:781o 96:786o 97:789o 99:788g 101:786g 103:785g 106:783g 107:784o 110:785o 111:787o 112:787g 116:786g 117:788o 118:791o 119:794o 120:798o 121:801o 122:804o 123:804g 124:803o 126:802g 128:800g 130:798g 132:796g 135:794g 138:795o 139:797o 140:797g 141:799o 142:798g 143:796g 144:792g 145:789g 146:785g 147:783g 148:781g 149:781g 150:781o 152:783o 154:786o 155:785g 157:787o 160:790o 161:792o 162:790g 164:789g 165:787g');
const PULSE = parse('29:791 31:792p 34:795p 36:793k 38:793k 41:791p 42:790k 45:789k 46:789p 48:791p 50:794p 52:793p 54:794p 56:789k 58:787k 60:786k 61:787p 64:791p 66:792p 67:791k 70:789k 73:788k 74:789p 76:787k 78:783k 80:782k 81:781k 82:782p 83:780k 84:780k 85:783p 86:785p 87:785k 88:784k 89:782k 90:777k 91:772k 92:770k 93:782p 94:795p 95:796p 96:793k 97:792k 98:791k 99:790k 100:791p 101:788k 103:786k 104:787p 105:788p 106:786k 107:787p 108:789p 110:788k 112:788k 113:789p 114:789p 115:788k 116:789k 117:794p 118:803p 119:804k 120:804k 121:805p 122:808p 123:807k 124:804k 125:802k 126:799k 128:797k 129:793k 130:790k 131:788k 132:787k 133:789p 134:791p 135:790k 136:790k 137:791p 139:793p 140:796p 141:794k 142:792k 143:788k 144:785k 145:784k 146:782k 147:777k 148:778p 149:780p 150:783p 151:786p 152:786k 154:787p 156:789p 158:793p 160:794p 161:796p 162:792k 163:790k 164:789k 165:789k');
const BARS = { '#1414ff': [76,77,78,79,80,81,83,87,88,89,90,91,92,101,102,103,106,143,144,145,146,147,163,164,165], '#ff10f0': [82,84,85,86,104,105,107,108,148,149,150,151,152,153,154], '#f01414': [94,95,117,118,119,121,122,138,139,140,159,160,161], '#14a0a0': [120,123,124,125,126,127,128,129] };

function drawAwesome() {
  const s = surface('awesome', 768, 42), zero = 791.3;
  grid(s, 767, 810, [773.5]);
  const at = (L, i) => { const k = Math.max(1, L.findIndex(p => p[0] >= i)), [a, b] = [L[k - 1], L[k]]; return a[1] + (b[1] - a[1]) * (i - a[0]) / (b[0] - a[0]); };
  [93, 94, 95, 96].forEach(i => s.rect(bx(i) - 3, at(SIGNAL, i), bx(i) + 4, zero, '#fbd0d0'));
  for (const c in BARS) BARS[c].forEach(i => { const y = at(PULSE, i); s.rect(bx(i) - 3, Math.min(y, zero), bx(i) + 4, Math.max(y, zero), c); });
  [125, 126, 127, 128, 129, 130, 131].forEach(i => s.rect(bx(i) - 3, zero, bx(i) + 4, at(SIGNAL, i), i > 128 ? '#bfeeee' : '#14a0a0'));
  s.line(23, zero, 1420, zero, '#1414ff', 2);
  PULSE.forEach(([i, y, c], k) => k && s.path([[bx(PULSE[k - 1][0]), PULSE[k - 1][1]], [bx(i), y]], c === 'p' ? '#b400b4' : '#06062c', i > 75 ? 3 : 1.5));
  SIGNAL.forEach(([i, y, c], k) => k && s.path([[bx(SIGNAL[k - 1][0]), SIGNAL[k - 1][1]], [bx(i), y]], c === 'o' ? '#ff9410' : '#66f566', 3));
  [[30, 791], [39, 791], [47, 790], [62, 789], [71, 789], [83, 781], [93, 782], [139, 798], [149, 782], [164, 789]].forEach(([i, y]) => s.tri(i, y, false, '#f5f500'));
  [[37, 792], [41, 792], [55, 792], [68, 789], [75, 789], [89, 781], [124, 803], [140, 798], [163, 789]].forEach(([i, y]) => s.tri(i, y, true, '#10f0f0'));
  axisEdge(s, 767, 810);
  s.axisLabel(804, '-5.000', '#222', false); s.axisLabel(783, '1.190,5', '#12b412'); s.axisLabel(796, '0', '#1414d0');
  s.axisLabel(787.5, '1.121,5', '#1414d0'); s.axisLabel(773.5, '5.000', '#222', false);
}

const FORCE = '-0.5~5.5 8.5~9.5 13.5~14.5 19.5~23.5 35.5~36.5 41.5~47.5 48.5~51.5 52.5~54.5 55.5~62.5 63.5~66.5 68.5~71.5 74.5~82.5 83.5~84.5 85.5~95.5 102.5~105.5 106.5~107.5 116.5~118.5 119.5~120.5 132.5~136.5 137.5~140.5 141.5~142.5 144.5~149.5 161.5~164.5';
function drawForce() {
  const s = surface('force', 811, 20), mid = 821.3;
  grid(s, 810, 831);
  s.rect(24, 810, bx(165.5), mid, '#fffe88'); s.rect(24, mid, bx(165.5), 831, '#d8d488');
  FORCE.split(' ').forEach(r => { const [a, b] = r.split('~').map(Number); s.rect(bx(a), 810, bx(b), mid, '#44fc44'); s.rect(bx(a), mid, bx(b), 831, '#36d450'); });
  s.line(23, mid, 1420, mid, '#111', 1.300);
  axisEdge(s, 810, 831);
  s.axisLabel(821, '0,5000');
}

function drawTime() {
  const s = surface('time', 832, 11);
  for (let y = 0; y < 45; y++) {
    const x = 45.5 + 33.74 * y;
    s.line(x, 831, x, 833, '#6b7f8a');
    s.text(x, 838.500, String(1986 + y), '#222', 'middle');
  }
}

// drawing tools, top to bottom
const seg = (c, w = 2) => ['Línea', `<path d="M2 9h14" stroke="${c}" stroke-width="${w}"/>`];
const diag = c => ['Tendencia', `<path d="M2 16L16 2" stroke="${c}" stroke-width="1.500"/>`];
const ray = c => ['Semirrecta', `<path d="M8 9h8" stroke="${c}" stroke-width="2"/><circle cx="7" cy="9" r="1.500" fill="#cde" stroke="${c}"/>`];
const oval = (c, f) => ['Elipse', `<ellipse cx="9" cy="9" rx="6.500" ry="4.500" fill="${f}" stroke="${c}" stroke-width="1.500"/><path d="M3 13v4M1 15h4M15 1v4M13 3h4" stroke="#22f"/>`];
const bell = '<path d="M3 13q2-1 2-5 0-3 4-4 4 1 4 4 0 4 2 5z" fill="#ffe21a" stroke="#a07c00"/><circle cx="9" cy="14.500" r="1.500" fill="#c8a000"/>';
const TOOLS = [
  ['Cursor', '<path d="M7 3l6 8-3 .3 1.500 3.500-1.500.7L8.500 12 6.500 14z" fill="#eee" stroke="#666"/>'],
  ['Zoom', '<circle cx="7" cy="7" r="4" fill="#d8e6ec" stroke="#333" stroke-width="1.300"/><path d="M10 10l5 5" stroke="#333" stroke-width="2"/>'],
  ['Zoom de zona', '<path d="M1 5h8v9H1z" stroke="#22f" stroke-dasharray="2 1"/><circle cx="10" cy="7" r="4" fill="#d8e6ec" stroke="#333" stroke-width="1.300"/><path d="M13 10l4 5" stroke="#333" stroke-width="2"/>'],
  ['Alerta en objeto', bell + '<path d="M1 4h9" stroke="#222"/><path d="M9 4l3 3 4-6M11 7l5 6-3 1z" fill="#fff" stroke="#44d"/>'],
  ['Alerta', bell + '<path d="M1 5q1-3 3-3M17 5q-1-3-3-3" stroke="#888"/>'],
  ['Fibonacci extensión', '<path d="M1 11h3l2-8 3 8h7" stroke="#223"/><path d="M8 8h8" stroke="#e98"/><path d="M14 17v-6h4M14 14h3" stroke="#22f" stroke-width="1.500"/>'],
  ['Fibonacci', '<path d="M3 7h12" stroke="#e76" stroke-dasharray="3 1"/><path d="M5 10h8" stroke="#44a"/><path d="M14 16v-6h4M14 13h3" stroke="#22f" stroke-width="1.500"/>'],
  ['Rectángulo azul', '<path d="M3 5h11v8H3z" stroke="#6f9cf0" stroke-width="1.500"/><path d="M3 11v4M1 13h4M14 3v4M12 5h4" stroke="#22f"/>'],
  ['Rectángulo rojo', '<path d="M3 5h11v8H3z" fill="#d8a6ae" stroke="#e22" stroke-width="1.500"/><path d="M3 11v4M1 13h4M14 3v4M12 5h4" stroke="#22f"/>'],
  ['Flecha', '<path d="M5 13l7-7" stroke="#111" stroke-width="2"/><path d="M9 3h6v6z" fill="#111"/><circle cx="4.500" cy="13.500" r="1.500" stroke="#111"/>'],
  ['Texto', '<rect x="3" y="2" width="13" height="13" rx="2" fill="#b6cfe6" stroke="#6f9cf0"/><path d="M6 5.500h7M9.500 5.500v7" stroke="#222" stroke-width="1.800"/>'],
  ['Comentario', '<circle cx="9" cy="8" r="6.500" fill="#b6cfe6" stroke="#6f9cf0"/><path d="M12 13l4 4-1-6" fill="#b6cfe6" stroke="#6f9cf0"/><path d="M6 5.500h6M9 5.500v6" stroke="#1a8f2a" stroke-width="1.800"/>'],
  ['Segmento', '<path d="M5 13l8-8" stroke="#222"/><circle cx="4.500" cy="13.500" r="1.700" fill="#9ab" stroke="#222"/><circle cx="13.500" cy="4.500" r="1.700" fill="#9ab" stroke="#222"/>'],
  ray('#7ff07f'), ray('#2aa52a'), ray('#0a7a0a'), ray('#f01414'),
  ['Regla', '<path d="M2 13L13 2l3 3L5 16z" fill="#b7cbd6" stroke="#556"/><path d="M5 10l1.500 1.500M8 7l1.500 1.500M11 4l1.500 1.500" stroke="#556"/>'],
  ['Zona', '<path d="M2 3h14v12H2z" fill="#9fc6b8" /><path d="M2 3h14" stroke="#e88" stroke-dasharray="2 1"/><path d="M2 15h14" stroke="#3a9" stroke-dasharray="2 1"/><path d="M3 12l4-5 3 3 5-5" stroke="#7fa6c8"/>'],
  oval('#e33', '#d0a0a8'), oval('#8a6030', '#a9a698'), oval('#149030', '#7dba94'), oval('#1fd83a', '#8fd6a4'),
  diag('#334'), diag('#2aa52a'), diag('#f01414'),
  seg('#222', 1), seg('#ff8a70'), seg('#08f008'), seg('#0a7a0a'), seg('#f01414'), seg('#6f9cf0'), seg('#0404a0'),
  ['Vertical', '<path d="M9 2v14" stroke="#333"/>'],
  ['Ángulo', '<path d="M1 14L11 4M1 14h14" stroke="#e44"/><path d="M8 9q3 1 3 5M9 12h4M15 5v4" stroke="#22f" stroke-width="1.500"/>'],
  ['Ciclo', '<circle cx="9" cy="9" r="6" stroke="#f0824a" stroke-width="1.500"/><path d="M9 6v5M6.500 8.500h5" stroke="#22f"/>'],
  ['Ondas 5', '<path d="M1 9l3 6 4-11 3 8 5-10M2 5h4M9 15h4M13 9h4" stroke="#22f"/>'],
  ['Ondas abc', '<path d="M1 4l5 9 3-8M1 12h4M11 5h5M11 12h5M13 3v4" stroke="#22f"/>'],
  ['Aceptar', '<path d="M2 10l3-3 3 3 7-8 2 2-9 12z" fill="#3fd04a" stroke="#1a8a28"/>'],
  ['Favorito', '<path d="M2 8h3v8H2zM6 8l4-6 2 1-1 4h5l-1 9H6z" fill="#3fd04a" stroke="#1a8a28"/>'],
  ['Eliminar', '<path d="M3 5l3-3 3 3 3-3 3 3-3 4 3 4-3 3-3-3-3 3-3-3 3-4z" fill="#f01414" stroke="#a00"/>']
];
document.getElementById('tools').innerHTML = TOOLS.map(([name, art], i) =>
  `<button class="side-btn${i ? '' : ' on'}" aria-label="${name}"><svg class="ic-side" viewBox="0 0 18 18">${art}</svg></button>`).join('');

function drawAll() { drawPrice(); drawTrains(); drawWilly(); drawAwesome(); drawForce(); drawTime(); }
drawAll();
window.addEventListener('resize', drawAll);
```
